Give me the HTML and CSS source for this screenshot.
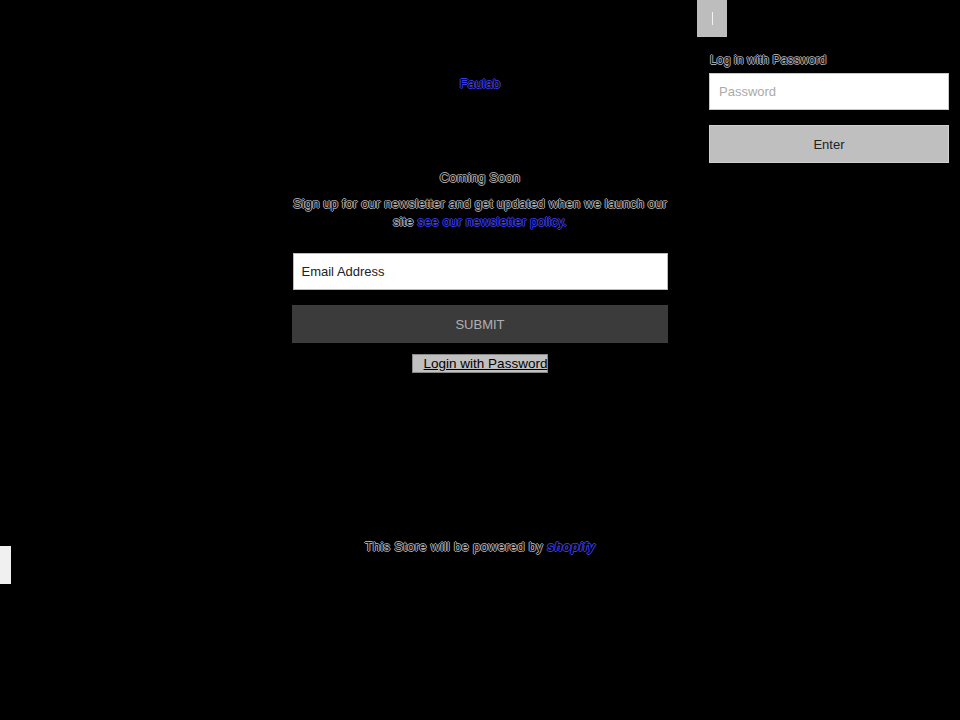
FILE: index.html
```html
<!DOCTYPE html>
<html>
<head>
<meta charset="utf-8">
<link rel="stylesheet" href="styles.css">
</head>
<body>
<div class="page">
  <button class="toggle"><span class="bar"></span></button>
  <aside class="pw-panel">
    <label class="pw-label hollow">Log in with Password</label>
    <input class="pw-input" type="password" placeholder="Password">
    <button class="enter">Enter</button>
  </aside>
  <main class="main">
    <div class="logo hollow-blue">Faulab</div>
    <h1 class="title hollow">Coming Soon</h1>
    <p class="lead hollow">Sign up for our newsletter and get updated when we launch our site <a class="hollow-blue" href="#">see our newsletter policy.</a></p>
    <input class="email" type="text" value="Email Address">
    <button class="submit">SUBMIT</button>
    <button class="login-btn">Login with Password</button>
  </main>
  <footer class="footer hollow">This Store will be powered by <span class="shopify hollow-blue">shopify</span></footer>
  <div class="side-tab"></div>
</div>
</body>
</html>
```
FILE: styles.css
```css
html, body {
  margin: 0;
  padding: 0;
  background: #000;
  height: 100%;
}
body {
  font-family: "Liberation Sans", Arial, sans-serif;
  font-size: 13px;
  color: #000;
}
.page {
  position: relative;
  width: 960px;
  height: 720px;
}
.hollow {
  color: #000;
  letter-spacing: 0.15px;
  text-shadow: 1px 0 #a8a8a8, -1px 0 #a8a8a8, 0 1px #a8a8a8, 0 -1px #a8a8a8;
}
.hollow-blue {
  color: #000;
  text-decoration: none;
  letter-spacing: 0.15px;
  text-shadow: 1px 0 #3a3ae8, -1px 0 #3a3ae8, 0 1px #3a3ae8, 0 -1px #3a3ae8;
}
.toggle {
  position: absolute;
  left: 697px;
  top: 0;
  width: 30px;
  height: 37px;
  background: #bdbdbd;
  border: 0;
  padding: 0;
  display: flex;
  align-items: center;
  justify-content: center;
}
.bar {
  display: block;
  width: 1px;
  height: 13px;
  background: #f2f2f2;
}
.pw-panel {
  position: absolute;
  left: 709px;
  top: 53px;
  width: 240px;
  display: flex;
  flex-direction: column;
}
.pw-label {
  font-size: 12px;
  margin-left: 1px;
  height: 15px;
  line-height: 15px;
  margin-bottom: 5px;
}
.pw-input {
  box-sizing: border-box;
  width: 240px;
  height: 37px;
  border: 1px solid #c8c8c8;
  background: #fff;
  padding: 0 9px;
  font-family: inherit;
  font-size: 13px;
  outline: none;
}
.pw-input::placeholder { color: #aaa; }
.enter {
  margin-top: 15px;
  width: 240px;
  height: 38px;
  border: 1px solid #d0d0d0;
  background: #bfbfbf;
  font-family: inherit;
  font-size: 13px;
  color: #222;
}
.main {
  width: 375px;
  margin: 0 auto;
  padding-top: 75px;
  display: flex;
  flex-direction: column;
  align-items: center;
  text-align: center;
}
.logo {
  font-size: 13px;
  line-height: 18px;
  height: 18px;
}
.title {
  font-size: 13px;
  font-weight: normal;
  margin: 76px 0 0;
  line-height: 18px;
}
.lead {
  margin: 8px 0 0;
  line-height: 18px;
  font-size: 13px;
}
.email {
  box-sizing: border-box;
  margin-top: 22px;
  width: 375px;
  height: 37px;
  border: 1px solid #bbb;
  background: #fff;
  padding: 0 8px;
  font-family: inherit;
  font-size: 13px;
  color: #222;
  outline: none;
}
.submit {
  margin-top: 15px;
  width: 376px;
  height: 38px;
  border: 0;
  background: #3b3b3b;
  color: #b0b0b0;
  font-family: inherit;
  font-size: 13px;
}
.login-btn {
  margin-top: 11px;
  height: 19px;
  padding: 0 0 0 11px;
  border: 1px solid #888;
  background: #c0c0c0;
  font-family: inherit;
  font-size: 13.5px;
  color: #000;
  text-decoration: underline;
  line-height: 17px;
}
.footer {
  position: absolute;
  left: 0;
  right: 0;
  top: 538px;
  text-align: center;
  font-size: 13px;
  line-height: 18px;
  letter-spacing: 0.3px;
}
.shopify {
  font-weight: bold;
  font-style: italic;
  letter-spacing: 0.3px;
}
.side-tab {
  position: absolute;
  left: 0;
  top: 546px;
  width: 11px;
  height: 38px;
  background: #f0f0f0;
}
```
